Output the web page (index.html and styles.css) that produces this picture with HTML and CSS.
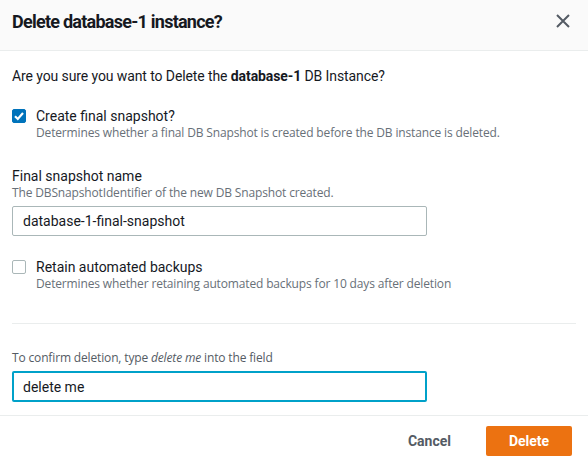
FILE: index.html
```html
<!DOCTYPE html>
<html lang="en">
<head>
<meta charset="utf-8">
<title>Delete database-1 instance?</title>
<link rel="stylesheet" href="styles.css">
</head>
<body>
<div class="modal">
  <header class="modal-header">
    <h2 class="modal-title">Delete database-1 instance?</h2>
    <button class="close" aria-label="Close">
      <svg width="16" height="16" viewBox="0 0 16 16"><path d="M2 2 L14 14 M14 2 L2 14" stroke="#545b64" stroke-width="2" fill="none"/></svg>
    </button>
  </header>
  <div class="modal-body">
    <p class="intro">Are you sure you want to Delete the <b>database-1</b> DB Instance?</p>

    <div class="check-row">
      <span class="checkbox checked">
        <svg width="14" height="14" viewBox="0 0 14 14"><path d="M3 7.2 L5.8 10 L11 4" stroke="#fff" stroke-width="2.2" fill="none"/></svg>
      </span>
      <div class="check-text">
        <div class="label">Create final snapshot?</div>
        <div class="desc">Determines whether a final DB Snapshot is created before the DB instance is deleted.</div>
      </div>
    </div>

    <div class="field">
      <div class="label">Final snapshot name</div>
      <div class="desc">The DBSnapshotIdentifier of the new DB Snapshot created.</div>
      <div class="input">database-1-final-snapshot</div>
    </div>

    <div class="check-row second">
      <span class="checkbox"></span>
      <div class="check-text">
        <div class="label">Retain automated backups</div>
        <div class="desc">Determines whether retaining automated backups for 10 days after deletion</div>
      </div>
    </div>

    <hr class="divider">

    <div class="confirm">
      <div class="desc dark">To confirm deletion, type <i>delete me</i> into the field</div>
      <div class="input focus">delete me</div>
    </div>
  </div>
  <footer class="modal-footer">
    <button class="btn-link">Cancel</button>
    <button class="btn-primary">Delete</button>
  </footer>
</div>
</body>
</html>
```

FILE: styles.css
```css
* { box-sizing: border-box; }
html, body { margin: 0; padding: 0; background: #fff; }
body {
  font-family: "Open Sans", "Noto Sans", Arial, sans-serif;
  color: #16191f;
  font-size: 14px;
}
.modal { width: 588px; height: 465px; display: flex; flex-direction: column; }
.modal-header {
  height: 51px;
  background: #fafafa;
  border-bottom: 1px solid #eaeded;
  display: flex;
  align-items: center;
  justify-content: space-between;
  padding: 0 17px 0 12px;
}
.modal-title {
  margin: 0; font-family: Roboto, "Open Sans", sans-serif;
  font-size: 18px; font-weight: 700; letter-spacing: -0.75px; line-height: 22px; padding-bottom: 6px;
}
.close { background: none; border: 0; padding: 0; width: 16px; height: 16px; display: flex; margin-bottom: 8px; }
.modal-body { padding: 15px 12px 0 12px; flex: 1; }
.intro { margin: 0; line-height: 20px; font-size: 14px; font-family: Roboto, "Open Sans", sans-serif; letter-spacing: -0.1px; }
.label { font-size: 14px; line-height: 18px; font-family: Roboto, "Open Sans", sans-serif; }
.desc { font-size: 12px; line-height: 16px; color: #687078; letter-spacing: -0.15px; }
.desc.dark { color: #545b64; }
.check-row { display: flex; gap: 10px; margin-top: 21px; }
.check-row.second { margin-top: 22px; }
.checkbox {
  width: 14px; height: 14px; flex: none; margin-top: 2px;
  border: 1px solid #aab7b8; border-radius: 2px; background: #fff;
  display: flex;
}
.checkbox.checked { background: #0073bb; border-color: #0073bb; }
.checkbox.checked svg { margin: -1px; }
.check-text { display: flex; flex-direction: column; }
.field { margin-top: 26px; }
.input {
  margin-top: 5px;
  width: 415px; height: 30px;
  border: 1px solid #aab7b8; border-radius: 2px;
  padding: 0 10px;
  display: flex; align-items: center;
  font-size: 14px; font-family: Roboto, "Open Sans", sans-serif;
}
.input.focus { border: 2px solid #00a1c9; padding: 0 9px; height: 31px; }
.divider { border: 0; border-top: 1px solid #eaeded; margin: 31px 0 0 0; width: 564px; }
.confirm { margin-top: 26px; }
.modal-footer {
  height: 50px;
  border-top: 1px solid #eaeded;
  display: flex; align-items: center; justify-content: flex-end;
  padding: 0 16px 0 12px;
  gap: 35px;
}
.btn-link { background: none; border: 0; font-family: Roboto, "Open Sans", sans-serif; font-weight: 700; font-size: 14px; color: #545b64; padding: 0; }
.btn-primary {
  background: #ec7211; color: #fff; border: 0; border-radius: 2px;
  width: 86px; height: 30px; font-family: Roboto, "Open Sans", sans-serif; font-weight: 700; font-size: 14px;
}
```
